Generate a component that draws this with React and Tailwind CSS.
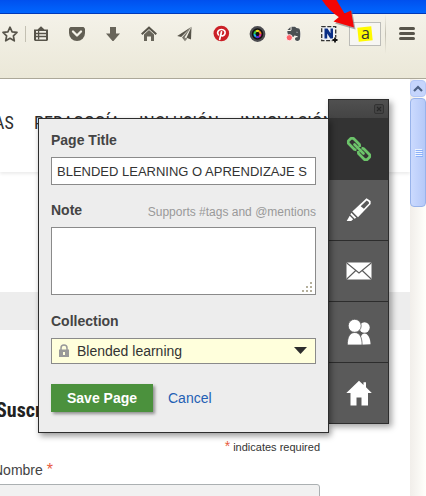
const inputBorder = 'border border-[#8a8a8a]';

function ToolButton({ label, children }) {
  return (
    <button type="button" aria-label={label} className="size-4 shrink-0">
      <svg viewBox="0 0 16 16" className="size-4 overflow-visible">
        {children}
      </svg>
    </button>
  );
}

function Toolbar() {
  return (
    <header className="relative">
      <div className="h-3.5 border-b border-[#0038b8] bg-gradient-to-b from-[#0050ee] to-[#0066ff]" />
      <div className="flex h-[65px] items-start border-b border-[#aca899] bg-gradient-to-b from-[#f4f2e9] to-[#ebe8d8] pl-0.5">
        <div className="mt-3 flex">
          <ToolButton label="Bookmark this page">
            <path
              d="M8 1.2 10.1 5.8 15 6.4 11.4 9.8 12.3 14.8 8 12.3 3.7 14.8 4.6 9.8 1 6.4 5.9 5.8Z"
              fill="none"
              stroke="#57544a"
              strokeWidth="1.7"
              strokeLinejoin="round"
            />
          </ToolButton>
          <div className="ml-[7px] h-4 w-px bg-[#c3c0b2]" />
        </div>
        <div className="mt-3 ml-[7px] flex gap-5">
          <ToolButton label="Bookmarks">
            <path d="M1 3.5h3.5L8 .3l3.5 3.2H15V14l-1 1H2l-1-1Z" fill="#57544a" />
            <path d="M3 5h10v8.5H3Z" fill="#f4f2e9" />
            <path d="M3 7.5h10M3 10.5h10M5.6 5v8.5" stroke="#57544a" strokeWidth="1.3" />
          </ToolButton>
          <ToolButton label="Save to Pocket">
            <path d="M1.5 1h13L16 2.5V7a8 8 0 0 1-16 0V2.5Z" fill="#625f54" />
            <path d="m4 5.5 4 4 4-4" fill="none" stroke="#f4f2e9" strokeWidth="2.3" strokeLinecap="round" strokeLinejoin="round" />
          </ToolButton>
          <ToolButton label="Downloads">
            <path d="M5 1h6v6.500h4L8.500 15h-1L1 7.500h4Z" fill="#68655a" />
          </ToolButton>
          <ToolButton label="Home">
            <path d="M.7 8.3 8 1.7l7.3 6.6" fill="none" stroke="#57544a" strokeWidth="2" />
            <path d="m8 4 5 4.5V15h-3v-4.5H6V15H3V8.5Z" fill="#68655a" />
          </ToolButton>
          <ToolButton label="Send page">
            <path d="M14.500.8 14 13.500 9.500 11.800Z" fill="#57544a" />
            <path d="M14.500.8.2 10l4 1Z" fill="#57544a" />
            <path d="M14 1.300 5 11.500l3 3.800L7.800 11Z" fill="#77746a" />
            <path d="M8.300 11.800 8.300 15.200 10 12.600Z" fill="#57544a" />
          </ToolButton>
          <ToolButton label="Pinterest">
            <circle cx="8.3" cy="7.5" r="7.8" fill="#cb2027" />
            <path
              d="M5.400 8.800C3.400 6.300 5.400 3.500 8.500 3.500c2.900 0 4 2 3.500 4-.6 2.500-3.300 3-4 1.500M8.500 5.800 6.700 13.300"
              fill="none"
              stroke="#fff"
              strokeWidth="1.7"
              strokeLinecap="round"
            />
          </ToolButton>
          <ToolButton label="Colour picker">
            <circle cx="8.5" cy="8" r="7.9" fill="#4c4c50" />
            <circle cx="8.5" cy="8" r="5.7" fill="#111" />
            <g fill="none" strokeWidth="2.2">
              <path d="M5.500 8a3 3 0 0 1 1.500-2.600" stroke="#38c840" />
              <path d="M7 5.400a3 3 0 0 1 3 0" stroke="#e8e020" />
              <path d="M10 5.400A3 3 0 0 1 11.500 8" stroke="#f08020" />
              <path d="M11.500 8A3 3 0 0 1 10 10.600" stroke="#e02890" />
              <path d="M10 10.600a3 3 0 0 1-3 0" stroke="#5030d8" />
              <path d="M7 10.600A3 3 0 0 1 5.500 8" stroke="#18b0e8" />
            </g>
            <circle cx="8.5" cy="8" r="1.8" fill="#111" />
          </ToolButton>
          <ToolButton label="Evernote">
            <path
              d="M6.500.800h3.500l1.500 1.200 2.500.600c1.500.5 1.700 8 .8 11-.7 2-4.800 1.800-4.800-.6 0-1.700 1.200-2 2.500-1.700V10c-1.500.3-2.300-.2-2.700-.8C9 11 7.500 11.300 5.500 10.800 3.300 10.300 2.300 8 2.300 5H5.500L6.500 4Z"
              fill="#4a4f52"
              stroke="#fff"
              strokeWidth=".6"
              paintOrder="stroke"
            />
            <path d="M5.500 1v3H2.500Z" fill="#4a4f52" />
            <path d="M11 6.300q1-1.200 2 .2Z" fill="#fff" />
            <circle cx="4.300" cy="11.700" r="3.100" fill="#ff6268" stroke="#fff" strokeWidth=".8" />
          </ToolButton>
          <ToolButton label="Capture selection">
            <rect x=".7" y=".7" width="14" height="14" fill="#eef1f6" stroke="#333" strokeWidth="1.300" strokeDasharray="4 1.600" />
            <path d="M3.500 12.500v-10h3l3 4.800V2.500H12v10H9.300L6.200 7.600v4.900Z" fill="#0a2f86" />
            <path d="M14 11.500v5M11.500 14h5" stroke="#f0eee3" strokeWidth="3.500" />
            <path d="M14 11.500v5M11.500 14h5" stroke="#111" strokeWidth="1.800" />
          </ToolButton>
        </div>
        <button
          type="button"
          aria-label="Save to Diigo"
          className="mt-2 ml-3 flex h-6 w-8 items-center justify-center border border-[#bcbcb8] bg-[#f7f6f3]"
        >
          <span className="flex h-3.5 w-3.5 -rotate-6 items-center justify-center bg-[#fffa00]">
            <span className="rotate-6 pb-0.5 font-['Open_Sans',sans-serif] text-base leading-4 text-[#333]">a</span>
          </span>
        </button>
        <div className="ml-1 h-10 w-px bg-gradient-to-b from-transparent via-[#c3c0b2] to-transparent" />
        <button type="button" aria-label="Open menu" className="mt-[13px] ml-[13px] flex w-4 flex-col gap-0.5">
          <span className="h-[3px] w-full rounded-sm bg-[#57544a]" />
          <span className="h-[3px] w-full rounded-sm bg-[#57544a]" />
          <span className="h-[3px] w-full rounded-sm bg-[#57544a]" />
        </button>
      </div>
      <svg viewBox="0 0 36 32" className="absolute top-0 left-[321px] h-8 w-9">
        <path d="M3 2 19 19l-5 4.500 20.500 6L31 10l-5 6Z" fill="#777" opacity=".6" />
        <path d="M1 0h14.500l8 13.500L30 10.500l3 17L12.500 21.500l5.500-4.500Q8 11 1 0Z" fill="#f50505" />
      </svg>
    </header>
  );
}

function Page() {
  return (
    <main className="relative min-w-0 flex-1 overflow-hidden bg-white">
      <nav className="flex h-[93px] items-start gap-[21px] pt-8 font-['Liberation_Sans_Narrow','Roboto_Condensed','DejaVu_Sans_Condensed',sans-serif] text-[18px] leading-6 whitespace-nowrap text-[#2e2e2e] shadow-[0_2px_3px_rgba(0,0,0,0.08)]">
        <a href="#areas" className="-ml-1.5 w-[19px]">AS</a>
        <a href="#pedagogia" className="w-[84px]">PEDAGOGÍA</a>
        <a href="#inclusion" className="w-20">INCLUSIÓN</a>
        <a href="#innovacion">INNOVACIÓN</a>
      </nav>
      <div className="mt-[120px] h-[38px] bg-[#ededed]" />
      <form className="mr-[90px]">
        <h2 className="mt-[66px] -ml-1 font-['Liberation_Sans_Narrow','Roboto_Condensed','DejaVu_Sans_Condensed',sans-serif] text-[20px] leading-7 font-bold text-[#222]">
          Suscríbete
        </h2>
        <p className="mt-3.5 text-right text-[11px] leading-4 text-[#333]">
          <span className="text-sm leading-4 text-[#e85c41]">*</span> indicates required
        </p>
        <label htmlFor="nombre" className="mt-[5px] -ml-[7px] block text-sm leading-5 text-[#444]">
          Nombre <span className="text-base leading-5 text-[#e85c41]">*</span>
        </label>
        <input
          id="nombre"
          className="mt-1 -ml-1 block h-8 w-[calc(100%+4px)] rounded-[3px] border border-[#abb0b2] bg-[#f1f1f1] px-2"
        />
      </form>
      <Clipper />
    </main>
  );
}

function Clipper() {
  return (
    <div className="absolute top-5 right-[21px] left-[38px] flex items-start">
      <form className="relative z-10 mt-[19px] min-w-0 flex-1 border border-[#2d2d2d] bg-[#ededed] px-3 pt-[11px] pb-5 text-sm leading-5 text-[#444] shadow-[2px_3px_6px_rgba(0,0,0,0.4)]">
        <label htmlFor="title" className="block font-bold">Page Title</label>
        <input
          id="title"
          defaultValue="BLENDED LEARNING O APRENDIZAJE S"
          className={`mt-[7px] block h-7 w-full bg-white px-[5px] text-[13px] text-[#333] ${inputBorder}`}
        />
        <div className="mt-[15px] flex items-center justify-between">
          <label htmlFor="note" className="font-bold">Note</label>
          <span className="pt-1 text-xs leading-4 text-[#999]">Supports #tags and @mentions</span>
        </div>
        <div className="relative mt-[7px]">
          <textarea id="note" className={`block h-[68px] w-full resize-none bg-white p-1 ${inputBorder}`} />
          <svg viewBox="0 0 10 10" className="absolute right-1 bottom-[3px] size-2.5" fill="#b5b09c">
            <path d="M8 0h2v2H8ZM4 4h2v2H4ZM8 4h2v2H8ZM0 8h2v2H0ZM4 8h2v2H4ZM8 8h2v2H8Z" />
          </svg>
        </div>
        <label htmlFor="collection" className="mt-4 block font-bold">Collection</label>
        <div className="relative mt-[7px]">
          <select
            id="collection"
            className={`block h-[26px] w-full appearance-none bg-[#ffffdc] pl-[25px] text-[#333] ${inputBorder}`}
          >
            <option>Blended learning</option>
          </select>
          <svg viewBox="0 0 10 13" className="pointer-events-none absolute top-1.5 left-2 h-[13px] w-2.5">
            <path d="M2 6V4a3 3 0 0 1 6 0v2" fill="none" stroke="#999" strokeWidth="1.5" />
            <path d="M0 5.5h10V13H0Z" fill="#999" />
            <path d="M4 8h2v3H4Z" fill="#ffffdc" />
          </svg>
          <svg viewBox="0 0 13 7" className="pointer-events-none absolute top-[9px] right-[9px] h-[7px] w-[13px]">
            <path d="M0 0h13L6.5 7Z" fill="#2d2d2d" />
          </svg>
        </div>
        <div className="mt-5 flex items-center">
          <button type="submit" className="h-7 w-[102px] bg-[#4b913d] font-bold text-white shadow-[2px_2px_3px_rgba(0,0,0,0.4)]">
            Save Page
          </button>
          <a href="#cancel" className="ml-[15px] text-[#2460b4]">Cancel</a>
        </div>
      </form>
      <Sidebar />
    </div>
  );
}

function SideButton({ label, children }) {
  return (
    <button
      type="button"
      aria-label={label}
      className="flex h-[61px] w-full items-center justify-center border-b border-[#2d2d2d] bg-[#5a5a5a]"
    >
      <svg viewBox="0 0 26 26" className="size-[26px]" fill="#fff">
        {children}
      </svg>
    </button>
  );
}

function Sidebar() {
  return (
    <aside className="-ml-px w-[61px] shrink-0 border border-b-0 border-[#2d2d2d] shadow-[3px_3px_6px_rgba(0,0,0,0.35)]">
      <div className="flex h-[18px] items-center justify-end bg-gradient-to-b from-[#505050] to-[#444] pr-1">
        <button
          type="button"
          aria-label="Close"
          className="flex size-2.5 items-center justify-center rounded-xs border border-[#333] bg-[#444]"
        >
          <svg viewBox="0 0 6 6" className="size-1.5">
            <path d="m1 1 4 4M5 1 1 5" stroke="#282828" strokeWidth="1.1" />
          </svg>
        </button>
      </div>
      <button type="button" aria-label="Save page" className="flex h-[62px] w-full items-center justify-center bg-[#333]">
        <svg viewBox="0 0 26 26" className="size-[26px]" fill="none" stroke="#6cc46a" strokeWidth="2.7" strokeLinejoin="round">
          <path d="M10.500 13.800 8.500 13.500 2.300 7.300V5L5 2.300h2.300l6.200 6.200.300 2.500" />
          <path d="m15.500 12.200 2 .300 6.200 6.200V21L21 23.700h-2.300l-6.200-6.200-.300-2.500" />
          <path d="m8.500 8.500 9 9" strokeLinecap="round" />
        </svg>
      </button>
      <SideButton label="Annotate">
        <path d="M20.500 1.200 24.600 4v3L12 20.200 6.300 14.500Z" />
        <path d="m20.700 3.500 2.200 1.500v1.500l-5 5.300-3.200-2.500Z" fill="#5a5a5a" />
        <path d="m5.300 15.700 5 5-1.700 1-4.200-4.200Z" />
        <path d="m3.700 18.700 3.500 3.600-2 1.700H.700Z" />
      </SideButton>
      <SideButton label="Send by mail">
        <rect x=".5" y="4.5" width="25" height="17" rx="1" />
        <path d="m.8 5 12.200 10L25.200 5M.8 21l9-8.500M25.200 21l-9-8.500" fill="none" stroke="#5a5a5a" strokeWidth="1.1" />
      </SideButton>
      <SideButton label="Groups">
        <circle cx="18.5" cy="8.500" r="5.200" />
        <path d="M14 25.800c.2-7 1-11.300 4.500-11.300s6 5 6 10.800Z" />
        <path d="M1.300 26C1.300 18.500 3.500 13.500 8.700 13.500s7.400 5 7.400 12.500Z" stroke="#5a5a5a" strokeWidth=".8" />
        <circle cx="8.700" cy="6.800" r="6.500" stroke="#5a5a5a" strokeWidth=".8" />
      </SideButton>
      <SideButton label="My library">
        <path d="M13 .8 17.500 5V2.300H20v5l5.800 5.700H22V25.500h-6.500V17.500h-5v8H4.500V13H.3Z" />
      </SideButton>
    </aside>
  );
}

function Scrollbar() {
  return (
    <div className="flex w-4 shrink-0 flex-col bg-gradient-to-r from-[#f1eeea] to-[#fffffb]">
      <button
        type="button"
        aria-label="Scroll up"
        className="mt-px flex h-[17px] items-center justify-center rounded-sm border border-[#b4c8f6] bg-[#c5d5fc]"
      >
        <svg viewBox="0 0 10 7" className="h-[7px] w-2.5">
          <path d="m1 6 4-4 4 4" fill="none" stroke="#4d6185" strokeWidth="2.2" />
        </svg>
      </button>
      <div className="mt-px flex h-[109px] flex-col items-center justify-center gap-px rounded-sm border border-[#98b3ea] bg-gradient-to-r from-[#cbdafe] to-[#b5c9f8]">
        {[0, 1, 2, 3].map((i) => (
          <span key={i} className="h-px w-[7px] bg-[#eef4fe] shadow-[1px_1px_0_#8cb0f8]" />
        ))}
      </div>
    </div>
  );
}

export default function App() {
  return (
    <div className="flex h-screen flex-col overflow-hidden font-['Liberation_Sans',Arial,sans-serif]">
      <Toolbar />
      <div className="flex min-h-0 flex-1">
        <Page />
        <Scrollbar />
      </div>
    </div>
  );
}
